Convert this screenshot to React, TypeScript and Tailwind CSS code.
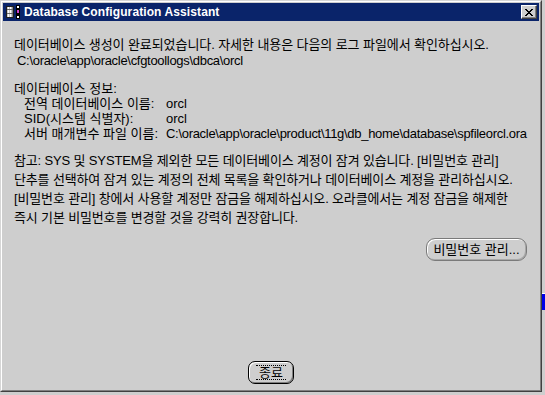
const CloseGlyph = () => (
  <svg width="8" height="7" viewBox="0 0 8 7" shapeRendering="crispEdges">
    <path d="M0 0h2v1h-2zM6 0h2v1h-2zM1 1h2v1h-2zM5 1h2v1h-2zM2 2h4v1h-4zM3 3h2v1h-2zM2 4h4v1h-4zM1 5h2v1h-2zM5 5h2v1h-2zM0 6h2v1h-2zM6 6h2v1h-2z" fill="#000" />
  </svg>
);

const DbIcon = () => (
  <svg width="16" height="14" viewBox="0 0 16 14" shapeRendering="crispEdges">
    <rect x="1" y="1" width="8" height="12" rx="1" fill="#202020" />
    <rect x="2" y="2" width="6" height="10" fill="#c8c8c8" />
    <rect x="3" y="2" width="1" height="10" fill="#ffffff" />
    <rect x="5" y="2" width="1" height="10" fill="#ffffff" />
    <rect x="7" y="2" width="1" height="10" fill="#8a8a8a" />
    <rect x="2" y="4" width="6" height="1" fill="#6a6a6a" />
    <rect x="2" y="8" width="6" height="1" fill="#6a6a6a" />
    <rect x="11" y="0" width="4" height="14" fill="#000000" />
    <rect x="12" y="1" width="2" height="2" fill="#ffffff" />
    <rect x="12" y="5" width="2" height="3" fill="#d040d0" />
    <rect x="12" y="11" width="2" height="2" fill="#ffffff" />
  </svg>
);

export default function App() {
  return (
    <div className="w-[545px] h-[395px] bg-[#cecece] flex flex-col overflow-hidden font-['Liberation_Sans','Noto_Sans_CJK_KR',sans-serif] text-black">
      <div className="flex">
        <div className="w-[542px] h-[392px] border-t border-l border-[#d6d6d6] border-r-[#404040] border-b-[#404040] border-r border-b">
          <div className="h-full flex flex-col p-px border-t border-l border-white border-r border-b border-r-[#808080] border-b-[#808080]">
            <div className="h-[18px] flex items-center bg-[#0a246a] pl-[2px] pr-[2px]">
              <DbIcon />
              <span className="ml-[3px] text-white text-[12px] font-bold tracking-[0.1px] leading-none">
                Database Configuration Assistant
              </span>
              <div className="ml-auto w-[16px] h-[14px] flex items-center justify-center bg-[#cecece] border-t border-l border-white border-r border-b border-r-[#404040] border-b-[#404040] shadow-[inset_-1px_-1px_0_#808080]">
                <CloseGlyph />
              </div>
            </div>

            <div className="flex-1 flex flex-col px-[11px] pt-[16px] pb-[5px] text-[13px]">
              <div className="leading-[16px]">
                <p className="tracking-[-0.08px]">
                  데이터베이스 생성이 완료되었습니다. 자세한 내용은 다음의 로그 파일에서 확인하십시오.
                </p>
                <p className="pl-[3px] tracking-[-0.3px]">{"C:\\oracle\\app\\oracle\\cfgtoollogs\\dbca\\orcl"}</p>
              </div>

              <div className="mt-[12px] leading-[15px]">
                <p>데이터베이스 정보:</p>
                <div className="grid grid-cols-[142px_1fr] pl-[10px] whitespace-nowrap">
                  <span>전역 데이터베이스 이름:</span>
                  <span>orcl</span>
                  <span>SID(시스템 식별자):</span>
                  <span>orcl</span>
                  <span>서버 매개변수 파일 이름:</span>
                  <span className="tracking-[-0.3px]">
                    {"C:\\oracle\\app\\oracle\\product\\11g\\db_home\\database\\spfileorcl.ora"}
                  </span>
                </div>
              </div>

              <div className="mt-[10px] leading-[19px] whitespace-nowrap tracking-[-0.15px]">
                <p>참고: SYS 및 SYSTEM을 제외한 모든 데이터베이스 계정이 잠겨 있습니다. [비밀번호 관리]</p>
                <p>단추를 선택하여 잠겨 있는 계정의 전체 목록을 확인하거나 데이터베이스 계정을 관리하십시오.</p>
                <p>[비밀번호 관리] 창에서 사용할 계정만 잠금을 해제하십시오. 오라클에서는 계정 잠금을 해제한</p>
                <p>즉시 기본 비밀번호를 변경할 것을 강력히 권장합니다.</p>
              </div>

              <div className="self-end mt-[11px] mr-px w-[101px] h-[23px] flex items-center justify-center rounded-[9px] border border-[#7a7a7a] shadow-[inset_1px_1px_0_#ffffff,inset_-1px_-1px_0_#a8a8a8] leading-none">
                비밀번호 관리...
              </div>

              <div className="flex-1" />

              <div className="self-center w-[46px] h-[23px] flex items-center justify-center rounded-[7px] border border-black shadow-[inset_1px_1px_0_#ffffff,inset_-1px_-1px_0_#808080]">
                <span className="w-[30px] h-[15px] flex items-center justify-center border-y border-dotted border-black leading-none">
                  종료
                </span>
              </div>
            </div>
          </div>
        </div>
        <div className="w-[3px] flex flex-col">
          <div className="h-[293px]" />
          <div className="h-[17px] bg-[#0000e8] border-t border-white" />
        </div>
      </div>
    </div>
  );
}
